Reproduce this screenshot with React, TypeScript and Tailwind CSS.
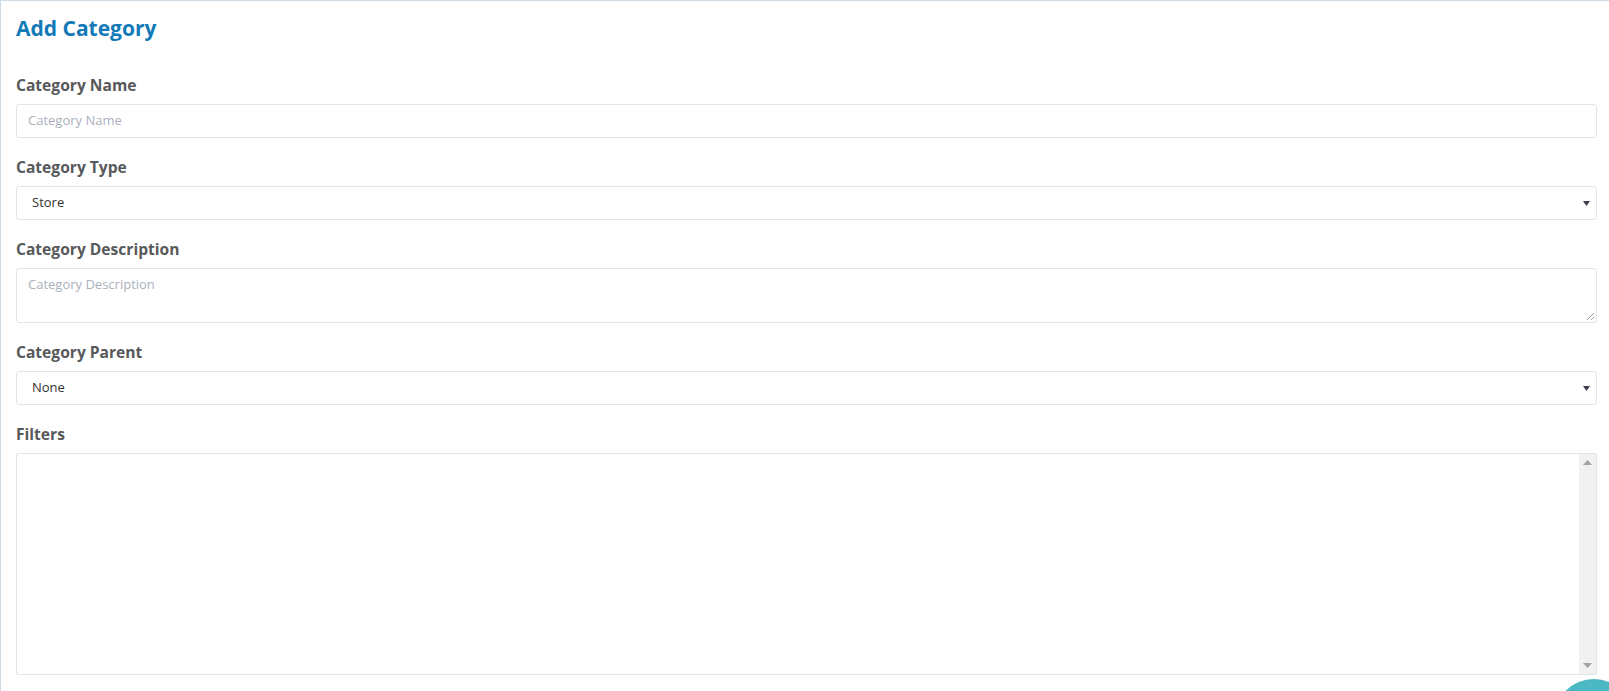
import React from "react";

const font = { fontFamily: '"Open Sans", "Noto Sans", Arial, sans-serif' };

function Label({ children }: { children: React.ReactNode }) {
  return (
    <div className="text-[15.6px] leading-[22px] font-bold text-[#58595b] mb-[8px]">{children}</div>
  );
}

function SelectBox({ value }: { value: string }) {
  return (
    <div className="flex h-[34px] items-center justify-between rounded-[3px] border border-[#dfe5ea] bg-white pl-[15px] pr-[6px]">
      <span className="text-[13px] text-[#333]">{value}</span>
      <svg width="7" height="5" viewBox="0 0 7 5">
        <path d="M0 0 L7 0 L3.5 5 Z" fill="#3b3f4f" />
      </svg>
    </div>
  );
}

export default function App() {
  return (
    <div style={font} className="relative h-[691px] w-full overflow-hidden border-l border-t border-[#cfdbe4] bg-white pl-[15px] pr-[12px]">
      <h3 className="mt-[14px] mb-[33px] text-[21px] leading-[26px] font-bold text-[#137ab8]">Add Category</h3>

      <Label>Category Name</Label>
      <div className="flex h-[34px] items-center rounded-[3px] border border-[#dfe5ea] bg-white px-[11px] text-[13px] text-[#aab0bd]">
        Category Name
      </div>

      <div className="mt-[18px]">
        <Label>Category Type</Label>
        <SelectBox value="Store" />
      </div>

      <div className="mt-[18px]">
        <Label>Category Description</Label>
        <div className="relative h-[55px] rounded-[3px] border border-[#dfe5ea] bg-white px-[11px] pt-[6px] text-[13px] text-[#aab0bd]">
          Category Description
          <svg className="absolute right-[1px] bottom-[1px]" width="9" height="9" viewBox="0 0 9 9">
            <path d="M8 1 L1 8 M8 5 L5 8" stroke="#9a9a9a" strokeWidth="1" />
          </svg>
        </div>
      </div>

      <div className="mt-[18px]">
        <Label>Category Parent</Label>
        <SelectBox value="None" />
      </div>

      <div className="mt-[18px]">
        <Label>Filters</Label>
        <div className="flex h-[222px] rounded-[2px] border border-[#dfe5ea] bg-white">
          <div className="flex-1" />
          <div className="flex w-[17px] flex-col items-center justify-between bg-[#f1f1f1] py-[6px]">
            <svg width="9" height="5" viewBox="0 0 9 5">
              <path d="M0 5 L9 5 L4.5 0 Z" fill="#a3a3a3" />
            </svg>
            <svg width="9" height="5" viewBox="0 0 9 5">
              <path d="M0 0 L9 0 L4.5 5 Z" fill="#a3a3a3" />
            </svg>
          </div>
        </div>
      </div>

      <div className="absolute left-[1553px] top-[678px] h-[80px] w-[80px] rounded-full bg-[#4cb8c4]" />
    </div>
  );
}
